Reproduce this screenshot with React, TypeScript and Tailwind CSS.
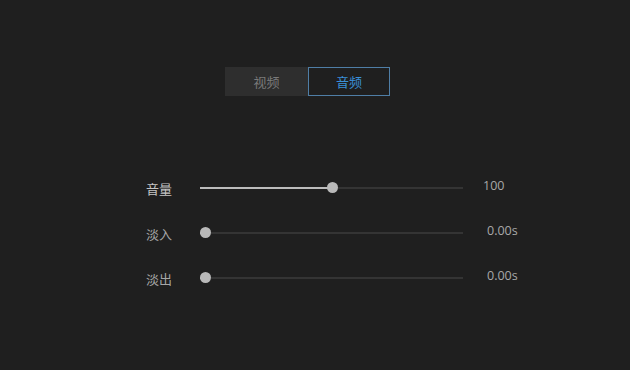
import React from "react";

const rows = [
  { label: "音量", value: "100", fill: 132, valueOffset: "ml-[20px]", bright: true },
  { label: "淡入", value: "0.00s", fill: 5, valueOffset: "ml-[24px]", bright: false },
  { label: "淡出", value: "0.00s", fill: 5, valueOffset: "ml-[24px]", bright: false },
];

function Slider({ fill }: { fill: number }) {
  return (
    <div className="relative h-[11px] w-[263px] flex items-center">
      <div className="h-[2px] w-full bg-[#343434]" />
      <div className="absolute left-0 top-[4.5px] h-[2px] bg-[#bcbcbc]" style={{ width: fill }} />
      <div
        className="absolute top-0 h-[11px] w-[11px] rounded-full bg-[#b9b9b9]"
        style={{ left: fill - 5.5 }}
      />
    </div>
  );
}

export default function App() {
  return (
    <div
      className="w-[630px] h-[370px] bg-[#1f1f1f] overflow-hidden"
      style={{ fontFamily: '"Noto Sans CJK SC", "Noto Sans", sans-serif' }}
    >
      {/* tabs */}
      <div className="pt-[67px] pl-[225px] flex">
        <div className="w-[83px] h-[29px] bg-[#2e2e2e] text-[#7a7a7a] text-[13px] flex items-center justify-center">
          视频
        </div>
        <div className="w-[82px] h-[29px] border border-[#4f7ea6] text-[#3a8fd8] text-[13px] flex items-center justify-center">
          音频
        </div>
      </div>

      {/* sliders */}
      <div className="mt-[86px] flex flex-col gap-[34px]">
        {rows.map((r) => (
          <div key={r.label} className="flex items-center h-[11px]">
            <div
              className={`w-[54px] ml-[146px] text-[13px] ${
                r.bright ? "text-[#c4c4c4]" : "text-[#a6a6a6]"
              } translate-y-[1px]`}
            >
              {r.label}
            </div>
            <Slider fill={r.fill} />
            <div
              className={`${r.valueOffset} text-[12.5px] text-[#a8a8a8] -translate-y-[1px]`}
              style={{ fontFamily: '"Open Sans", "Noto Sans", sans-serif' }}
            >
              {r.value}
            </div>
          </div>
        ))}
      </div>
    </div>
  );
}
